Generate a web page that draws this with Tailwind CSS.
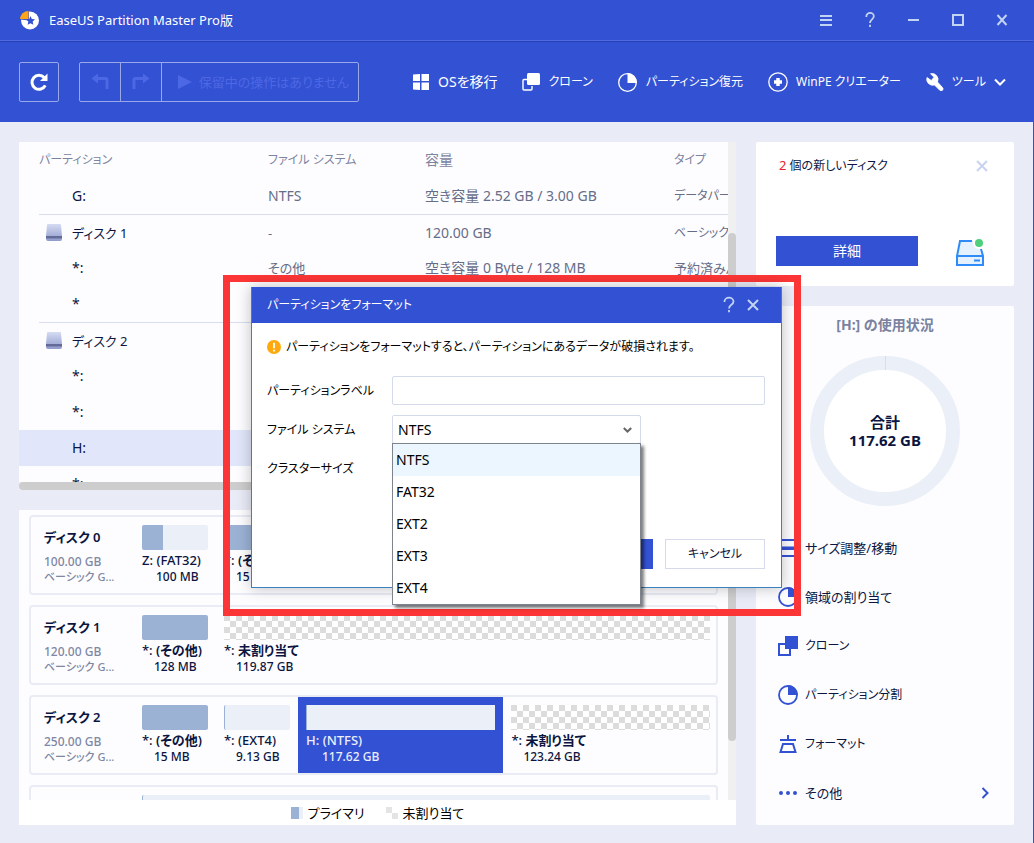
<!DOCTYPE html>
<html lang="ja">
<head>
<meta charset="utf-8">
<meta name="viewport" content="width=device-width, initial-scale=1">
<title>EaseUS Partition Master Pro版</title>
<script src="https://cdn.jsdelivr.net/npm/@tailwindcss/browser@4"></script>
</head>
<body class="relative flex h-screen min-h-[843px] flex-col overflow-hidden border-r border-[#3351d3] bg-[#e9ecf7] font-['Noto_Sans','Noto_Sans_CJK_JP',sans-serif] text-[13px] leading-5 text-[#0b1540] [font-feature-settings:'palt']">

<header class="bg-[#3351d3] text-white">
  <div class="flex h-[41px] items-center border-b border-[#4f6ce4] pr-[9px] pl-5">
    <svg class="mr-2.5 size-[19px]" viewBox="0 0 19 19"><circle cx="10" cy="9.500" r="9" fill="#fff"/><path d="M9 9.500V0A9.500 9.500 0 0 0 0 8.500z" fill="#3351d3"/><path d="M8.500 8.200V0A8.500 8.500 0 0 0 0 8z" fill="#ffa616"/><path d="M10.500 5l1.300 2.900 3.200.4-2.300 2.300.6 3.200-2.800-1.600-2.800 1.600.6-3.200-2.300-2.300 3.200-.4z" fill="#3351d3"/></svg>
    <h1 class="flex-1 text-[13px]">EaseUS Partition Master Pro版</h1>
    <button class="flex h-10 w-11 items-center justify-center" aria-label="メニュー"><svg class="size-5" viewBox="0 0 20 20" stroke="#c2d3f3" stroke-width="2"><path d="M4 6h12M4 10h12M4 15h12"/></svg></button>
    <button class="flex h-10 w-11 items-center justify-center" aria-label="ヘルプ"><svg class="size-5" viewBox="0 0 20 20" fill="none" stroke="#c2d3f3" stroke-width="1.800"><path d="M6.400 7V6.200a3.700 3.300 0 0 1 7.400 0c0 3-3.800 3.300-3.800 6.800M10 14.800v2.200"/></svg></button>
    <button class="flex h-10 w-11 items-center justify-center" aria-label="最小化"><svg class="size-5" viewBox="0 0 20 20" stroke="#c2d3f3" stroke-width="2"><path d="M4 10h11"/></svg></button>
    <button class="flex h-10 w-11 items-center justify-center" aria-label="最大化"><svg class="size-5" viewBox="0 0 20 20" fill="none" stroke="#c2d3f3" stroke-width="2"><path d="M5 5h10v10H5z"/></svg></button>
    <button class="flex h-10 w-11 items-center justify-center" aria-label="閉じる"><svg class="size-5" viewBox="0 0 20 20" stroke="#c2d3f3" stroke-width="2"><path d="M5.500 5l9 10M14.500 5l-9 10"/></svg></button>
  </div>
  <div class="flex h-[81px] items-center border-t border-[#2740b4] pr-[27px] pl-[19px]">
    <button class="mr-5 flex size-10 items-center justify-center rounded-xs border border-[#98a8e9]" aria-label="更新"><svg class="size-5" viewBox="0 0 20 20"><path d="M16.300 13.400A7 7 0 1 1 15.200 5.600" fill="none" stroke="#fff" stroke-width="3"/><path d="M18.500 1.500v7.500h-7.500z" fill="#fff"/></svg></button>
    <div class="flex h-10 rounded-xs border border-[#98a8e9] text-[#4d68e4]">
      <button class="flex w-[41px] items-center justify-center border-r border-[#98a8e9]" aria-label="元に戻す" disabled><svg class="size-5" viewBox="0 0 20 20"><path d="M8 1.500v10L1.500 6.500z" fill="currentColor"/><path d="M7 6.500h8.500a1.500 1.500 0 0 1 1.500 1.500V17" fill="none" stroke="currentColor" stroke-width="3"/></svg></button>
      <button class="flex w-[41px] items-center justify-center border-r border-[#98a8e9]" aria-label="やり直し" disabled><svg class="size-5" viewBox="0 0 20 20"><path d="M12 1.500v10l6.500-5z" fill="currentColor"/><path d="M13 6.500H4.500A1.500 1.500 0 0 0 3 8v9" fill="none" stroke="currentColor" stroke-width="3"/></svg></button>
      <button class="flex w-[196px] items-center justify-between pr-[9px] pl-4 text-[13px] whitespace-nowrap" disabled><svg class="size-[14px] shrink-0" viewBox="0 0 14 14"><path d="M0 0l14 7-14 7z" fill="currentColor"/></svg>保留中の操作はありません</button>
    </div>
    <nav class="ml-[53px] flex flex-1 items-center justify-between text-xs leading-5 whitespace-nowrap">
      <button class="flex items-center gap-2 text-sm"><svg class="size-[18px]" viewBox="0 0 18 18" fill="#fff"><path d="M1 1.500L8 1v7H1zM9.500 1H17v7H9.500zM1 9.500h7V17l-7-.5zM9.500 9.500H17V17H9.500z"/></svg>OSを移行</button>
      <button class="flex items-center gap-2"><svg class="size-[18px]" viewBox="0 0 18 18"><path d="M5 6.500H2a1 1 0 0 0-1 1V16a1 1 0 0 0 1 1h7a1 1 0 0 0 1-1v-3" fill="none" stroke="#fff" stroke-width="1.400"/><rect x="5" y="0" width="13" height="12" rx="1.500" fill="#fff"/></svg>クローン</button>
      <button class="flex items-center gap-2"><svg class="size-5" viewBox="0 0 20 20"><circle cx="9.500" cy="10.500" r="8.800" fill="none" stroke="#fff" stroke-width="1.300"/><path d="M9.500 1v10h9.500A9.500 10 0 0 0 9.500 1z" fill="#fff"/></svg>パーティション復元</button>
      <button class="flex items-center gap-2"><svg class="size-5" viewBox="0 0 20 20"><circle cx="10" cy="10" r="9.200" fill="none" stroke="#fff" stroke-width="1.300"/><path d="M10 6v8M6 10h8" stroke="#fff" stroke-width="3.500"/></svg>WinPE クリエーター</button>
      <button class="flex items-center gap-2"><svg class="size-[18px]" viewBox="0 0 18 18"><path d="M4.500.7L8 4.200 5.300 7.500 1 4.500A6 6 0 0 0 8.500 12l5.300 5.300a1.800 1.800 0 0 0 3-.5 2 2 0 0 0-.3-2.200L11.500 9A6 6 0 0 0 4.500.7z" fill="#fff" stroke="#fff" stroke-width=".8"/></svg>ツール<svg class="h-[8px] w-3" viewBox="0 0 12 8"><path d="M1 1.500l5 5 5-5" fill="none" stroke="#fff" stroke-width="2"/></svg></button>
    </nav>
  </div>
</header>

<main class="flex min-h-0 flex-1 gap-5 px-[19px] pt-5 pb-[18px]">
  <div class="flex min-w-0 flex-1 flex-col gap-5">
    <section class="flex min-h-0 flex-[348_1_0%] flex-col overflow-hidden">
      <div class="flex min-h-0 flex-1">
        <div class="min-w-0 flex-1 overflow-hidden bg-[#fdfdff]">
          <table class="w-full table-fixed border-separate border-spacing-0 text-left whitespace-nowrap text-[#666d88]">
            <thead class="text-xs leading-5 text-[#7d84a0]">
              <tr class="h-9"><th class="w-[249px] p-0 pl-5 font-normal">パーティション</th><th class="w-[157px] p-0 font-normal">ファイル システム</th><th class="w-[249px] p-0 text-sm font-normal">容量</th><th class="p-0 font-normal">タイプ</th></tr>
            </thead>
            <tbody>
              <tr class="h-9"><td class="p-0 pl-[53px] text-sm text-[#0b1540]">G:</td><td class="p-0 text-sm">NTFS</td><td class="p-0 text-sm">空き容量 2.52 GB / 3.00 GB</td><td class="overflow-hidden p-0 text-xs leading-5">データパーティション</td></tr>
              <tr class="h-9"><td class="p-0 pl-5 text-[#0b1540]"><div class="flex h-9 items-center gap-2.5 border-t border-[#d8deed] pl-[7px]"><svg class="h-[17px] w-4" viewBox="0 0 16 17"><defs><linearGradient id="disk" x1="0" y1="0" x2="0" y2="1"><stop offset="0" stop-color="#d5dcf3"/><stop offset="1" stop-color="#8f9bcb"/></linearGradient></defs><path d="M2 0h12a1 1 0 0 1 1 1l1 11v3a2 2 0 0 1-2 2H2a2 2 0 0 1-2-2v-3L1 1a1 1 0 0 1 1-1z" fill="url(#disk)"/><path d="M0 12h16v2.500H0z" fill="#646b99"/></svg>ディスク 1</div></td><td class="border-t border-[#d8deed] p-0">-</td><td class="border-t border-[#d8deed] p-0 text-sm">120.00 GB</td><td class="overflow-hidden border-t border-[#d8deed] p-0 text-xs leading-5">ベーシック, GPT</td></tr>
              <tr class="h-9"><td class="p-0 pl-[53px] text-sm text-[#0b1540]">*:</td><td class="p-0">その他</td><td class="p-0 text-sm">空き容量 0 Byte / 128 MB</td><td class="overflow-hidden p-0 text-[13px]">予約済みパーティション</td></tr>
              <tr class="h-9"><td class="p-0 pl-[53px] text-sm text-[#0b1540]">*</td><td></td><td></td><td></td></tr>
              <tr class="h-9"><td class="p-0 pl-5 text-[#0b1540]"><div class="flex h-9 items-center gap-2.5 border-t border-[#d8deed] pl-[7px]"><svg class="h-[17px] w-4" viewBox="0 0 16 17"><path d="M2 0h12a1 1 0 0 1 1 1l1 11v3a2 2 0 0 1-2 2H2a2 2 0 0 1-2-2v-3L1 1a1 1 0 0 1 1-1z" fill="url(#disk)"/><path d="M0 12h16v2.500H0z" fill="#646b99"/></svg>ディスク 2</div></td><td class="border-t border-[#d8deed] p-0"></td><td class="border-t border-[#d8deed] p-0"></td><td class="border-t border-[#d8deed] p-0"></td></tr>
              <tr class="h-9"><td class="p-0 pl-[53px] text-sm text-[#0b1540]">*:</td><td></td><td></td><td></td></tr>
              <tr class="h-9"><td class="p-0 pl-[53px] text-sm text-[#0b1540]">*:</td><td></td><td></td><td></td></tr>
              <tr class="h-9 bg-[#e1e6fa]"><td class="p-0 pl-[53px] text-sm text-[#0b1540]">H:</td><td></td><td></td><td></td></tr>
              <tr class="h-9"><td class="p-0 pl-[53px] text-sm text-[#0b1540]">*:</td><td></td><td></td><td></td></tr>
            </tbody>
          </table>
        </div>
        <div class="w-2 bg-[#f0f0f0] pt-[91px]"><div class="h-full rounded-full bg-[#cdcdcd]"></div></div>
      </div>
      <div class="h-2 bg-[#f0f0f0] pr-5"><div class="h-2 rounded-full bg-[#cdcdcd]"></div></div>
    </section>

    <section class="flex min-h-0 flex-[315_1_0%] flex-col overflow-hidden bg-white">
      <div class="flex min-h-0 flex-1 bg-[#fdfdff]">
        <div class="flex min-w-0 flex-1 flex-col gap-2.5 overflow-hidden px-2.5 pt-[5px] font-medium whitespace-nowrap">
          <article class="flex h-20 shrink-0 rounded border-2 border-[#e9ecf5]">
            <div class="w-[103px] px-[13px] pt-2.5 text-xs leading-[15px] text-[#8087a3]"><h2 class="mb-[7px] text-[13px] leading-5 font-semibold text-[#0b1540]">ディスク 0</h2><p>100.00 GB</p><p class="text-[11px]">ベーシック G...</p></div>
            <div class="w-[82px] px-2 pt-2"><div class="flex h-[25px] overflow-hidden rounded-xs bg-[#ebeff8]"><div class="w-[21px] bg-[#9cb2d5]"></div></div><p>Z: (FAT32)</p><p class="pl-3.5 text-xs leading-[13px]">100 MB</p></div>
            <div class="w-[82px] px-2 pt-2"><div class="h-[25px] rounded-xs bg-[#9cb2d5]"></div><p>*: <b class="font-semibold">(その他)</b></p><p class="pl-3 text-xs leading-[13px]">15 MB</p></div>
          </article>
          <article class="flex h-20 shrink-0 rounded border-2 border-[#e9ecf5]">
            <div class="w-[103px] px-[13px] pt-2.5 text-xs leading-[15px] text-[#8087a3]"><h2 class="mb-[7px] text-[13px] leading-5 font-semibold text-[#0b1540]">ディスク 1</h2><p>120.00 GB</p><p class="text-[11px]">ベーシック G...</p></div>
            <div class="w-[82px] px-2 pt-2"><div class="h-[25px] rounded-xs bg-[#9cb2d5]"></div><p>*: <b class="font-semibold">(その他)</b></p><p class="pl-3 text-xs leading-[13px]">128 MB</p></div>
            <div class="flex-1 pt-2 pr-1.5 pl-2"><div class="h-[25px] bg-[conic-gradient(#fff_25%,#dcdcdc_0_50%,#fff_0_75%,#dcdcdc_0)] bg-[length:12px_12px]"></div><p>*: <b class="font-semibold">未割り当て</b></p><p class="pl-3 text-xs leading-[13px]">119.87 GB</p></div>
          </article>
          <article class="flex h-20 shrink-0 rounded border-2 border-[#e9ecf5]">
            <div class="w-[103px] px-[13px] pt-2.5 text-xs leading-[15px] text-[#8087a3]"><h2 class="mb-[7px] text-[13px] leading-5 font-semibold text-[#0b1540]">ディスク 2</h2><p>250.00 GB</p><p class="text-[11px]">ベーシック G...</p></div>
            <div class="w-[82px] px-2 pt-2"><div class="h-[25px] rounded-xs bg-[#9cb2d5]"></div><p>*: <b class="font-semibold">(その他)</b></p><p class="pl-3 text-xs leading-[13px]">15 MB</p></div>
            <div class="w-[82px] px-2 pt-2"><div class="h-[25px] rounded-xs border-l border-[#9cb2d5] bg-[#ebeff8]"></div><p>*: (EXT4)</p><p class="pl-3 text-xs leading-[13px]">9.13 GB</p></div>
            <div class="flex-[205] bg-[#3351d3] px-2 pt-2 text-[#ebeffb]"><div class="h-[25px] border-l border-[#9cb2d5] bg-[#ebeff8]"></div><p>H: (NTFS)</p><p class="pl-4 text-xs leading-[13px]">117.62 GB</p></div>
            <div class="flex-[215] pt-2 pr-1.5 pl-2"><div class="h-[25px] bg-[conic-gradient(#fff_25%,#dcdcdc_0_50%,#fff_0_75%,#dcdcdc_0)] bg-[length:12px_12px]"></div><p>*: <b class="font-semibold">未割り当て</b></p><p class="pl-3 text-xs leading-[13px]">123.24 GB</p></div>
          </article>
          <article class="flex h-20 shrink-0 rounded border-2 border-[#e9ecf5] pl-[111px]">
            <div class="flex-1 pt-2 pr-1.5"><div class="h-[25px] rounded-xs border-l border-[#9cb2d5] bg-[#ebeff8]"></div></div>
          </article>
        </div>
        <div class="w-2 bg-[#f0f0f0] pb-[59px]"><div class="h-full rounded-b-full bg-[#cdcdcd]"></div></div>
      </div>
      <div class="flex h-[25px] items-center justify-center gap-[21px] text-[13px] text-black">
        <span class="flex items-center gap-[5px]"><i class="h-3 w-3 border-r-4 border-[#ebeff8] bg-[#9cb2d5]"></i>プライマリ</span>
        <span class="flex items-center gap-[5px]"><i class="h-3 w-3 bg-[conic-gradient(#fff_25%,#e4e4e4_0_50%,#fff_0_75%,#e4e4e4_0)]"></i>未割り当て</span>
      </div>
    </section>
  </div>

  <aside class="flex w-[258px] shrink-0 flex-col gap-5">
    <section class="flex h-36 flex-col justify-between rounded-xs bg-white px-5 pt-[13px] pb-5">
      <div class="flex items-center justify-between pr-1.5 pl-[3px]"><p class="text-xs leading-5"><span class="text-[13px] text-[#e5222d]">2</span> 個の新しいディスク</p><button aria-label="閉じる"><svg class="size-3" viewBox="0 0 12 12" stroke="#c9d3f0" stroke-width="2"><path d="M1 1l10 10M11 1L1 11"/></svg></button></div>
      <div class="flex items-end justify-between pr-2.5">
        <button class="h-[30px] w-[142px] bg-[#3351d3] text-sm text-white">詳細</button>
        <svg class="h-7 w-7" viewBox="0 0 28 28"><path d="M4 3h13.500l7 6 2.500 9v9H1v-9z" fill="#e6f1ff"/><path d="M16 3H4L1 18v9h26v-9L25 11M1 18h26M18 22.500h6" fill="none" stroke="#2e8bf7" stroke-width="2"/><circle cx="23" cy="5" r="6" fill="#fff"/><circle cx="23" cy="5" r="4" fill="#4fce7c"/></svg>
      </div>
    </section>
    <section class="flex flex-1 flex-col rounded-xs bg-[#fdfdff]">
      <h2 class="pt-[9px] text-center text-sm leading-5 font-bold text-[#7a82a0]">[H:] の使用状況</h2>
      <div class="mx-auto mt-[21px] grid size-[150px] place-items-center">
        <svg class="col-start-1 row-start-1 size-[150px]" viewBox="0 0 150 150"><circle cx="75" cy="75" r="68" fill="#fff" stroke="#ebeff8" stroke-width="14"/><path d="M75.500 0v14" stroke="#d5def0"/></svg>
        <p class="z-10 col-start-1 row-start-1 text-center text-[15px] leading-[18px] font-bold">合計<br>117.62 GB</p>
      </div>
      <ul class="mt-[17px] px-[22px] text-[13px]">
        <li><button class="flex h-[49px] w-full items-center gap-[7px]"><svg class="size-5" viewBox="0 0 20 20" fill="#3351d3"><path d="M0 1h20v2H0zM0 17h20v2H0zM1 7h2v1.500h14V7h2v6h-2v-1H3v1H1z"/></svg>サイズ調整/移動</button></li>
        <li><button class="flex h-[49px] w-full items-center gap-[7px]"><svg class="size-5" viewBox="0 0 20 20"><circle cx="10" cy="10" r="9" fill="none" stroke="#3351d3" stroke-width="1.800"/><path d="M10 0v10h10A10 10 0 0 0 10 0z" fill="#3351d3"/></svg>領域の割り当て</button></li>
        <li><button class="flex h-[49px] w-full items-center gap-[7px]"><svg class="size-5" viewBox="0 0 20 20"><path d="M8 8H1v11h11v-7" fill="none" stroke="#3351d3" stroke-width="2"/><path d="M7 0h13v13H7z" fill="#3351d3"/></svg><span class="text-xs leading-5">クローン</span></button></li>
        <li><button class="flex h-[49px] w-full items-center gap-[7px]"><svg class="size-5" viewBox="0 0 20 20"><circle cx="10" cy="10" r="9" fill="none" stroke="#3351d3" stroke-width="1.800"/><path d="M10 0v10h10A10 10 0 0 0 10 0z" fill="#3351d3"/></svg><span class="text-xs leading-5">パーティション分割</span></button></li>
        <li><button class="flex h-[49px] w-full items-center gap-[7px]"><svg class="size-5" viewBox="0 0 20 20" fill="none" stroke="#3351d3" stroke-width="2"><path d="M10 1v5M2 6h16" /><path d="M5 10h10l2.500 8h-15z"/></svg><span class="text-xs leading-5">フォーマット</span></button></li>
        <li><button class="flex h-[49px] w-full items-center gap-[7px]"><svg class="size-5" viewBox="0 0 20 20" fill="#3351d3"><circle cx="3" cy="10" r="2"/><circle cx="10" cy="10" r="2"/><circle cx="17" cy="10" r="2"/></svg>その他<svg class="mr-[3px] ml-auto h-3 w-2" viewBox="0 0 8 12"><path d="M1.500 1L6.500 6l-5 5" fill="none" stroke="#3351d3" stroke-width="2"/></svg></button></li>
      </ul>
    </section>
  </aside>
</main>

<div class="absolute top-[275px] left-[223px] h-[341px] w-[578px] border-[7px] border-[#fc3636] pt-[5px] pl-[21px]">
  <div role="dialog" aria-labelledby="dlg-title" class="relative flex h-[301px] w-[531px] flex-col border border-t-0 border-[#3a82bd] bg-white text-xs leading-5 text-black shadow-[0_0_14px_rgba(0,0,0,0.25)]">
    <div class="flex h-9 items-center bg-[#3351d3] pr-[22px] pl-[15px] text-white">
      <h2 id="dlg-title" class="flex-1">パーティションをフォーマット</h2>
      <button class="mr-2.5" aria-label="ヘルプ"><svg class="h-5 w-4" viewBox="2 0 16 20" fill="none" stroke="#c2d3f3" stroke-width="1.800"><path d="M5.500 7V6.500a4.500 3.800 0 0 1 9 0c0 3.500-4.500 3-4.500 7M10 15v2.200"/></svg></button>
      <button aria-label="閉じる"><svg class="size-3" viewBox="0 0 12 12" stroke="#c2d3f3" stroke-width="2"><path d="M1 1l10 10M11 1L1 11"/></svg></button>
    </div>
    <form class="flex flex-1 flex-col px-4 pt-3.5 pb-[18px] pl-[15px]">
      <p class="flex items-center gap-[5px] whitespace-nowrap"><svg class="size-[14px] shrink-0" viewBox="0 0 14 14"><circle cx="7" cy="7" r="7" fill="#ffa90c"/><path d="M7 2.800v5.500M7 9.800v1.700" stroke="#fff" stroke-width="1.800"/></svg>パーティションをフォーマットすると、パーティションにあるデータが破損されます。</p>
      <div class="mt-[19px] grid grid-cols-[125px_1fr] items-center gap-y-2.5">
        <label for="label">パーティションラベル</label>
        <input id="label" type="text" class="h-[29px] w-full rounded-xs border border-[#d3dae9] px-1 outline-none">
        <label for="fs">ファイル システム</label>
        <div class="relative w-[249px] text-sm">
          <select id="fs" class="block h-[29px] w-full appearance-none rounded-xs border border-[#d3dae9] bg-white pl-[5px]"><option>NTFS</option><option>FAT32</option><option>EXT2</option><option>EXT3</option><option>EXT4</option></select>
          <svg class="pointer-events-none absolute top-3 right-[9px] h-[6px] w-[9px]" viewBox="0 0 9 6"><path d="M.8 1l3.700 3.500L8.200 1" fill="none" stroke="#666" stroke-width="2"/></svg>
          <ul role="listbox" aria-label="ファイル システム" class="absolute top-7 left-0 z-20 w-full border border-[#7d848e] bg-white leading-8 shadow-[3px_3px_3px_rgba(0,0,0,0.5)]">
            <li role="option" aria-selected="true" class="bg-[#ebf6fe] pl-[3px]">NTFS</li>
            <li role="option" aria-selected="false" class="pl-[3px]">FAT32</li>
            <li role="option" aria-selected="false" class="pl-[3px]">EXT2</li>
            <li role="option" aria-selected="false" class="pl-[3px]">EXT3</li>
            <li role="option" aria-selected="false" class="pl-[3px]">EXT4</li>
          </ul>
        </div>
        <p class="leading-[29px]">クラスターサイズ</p>
      </div>
      <div class="mt-auto flex justify-end gap-3">
        <button type="button" class="h-[30px] w-[100px] bg-[#3351d3] text-white" aria-label="OK"></button>
        <button type="button" class="h-[30px] w-[100px] border border-[#d5daec] bg-white text-[#0b1540]">キャンセル</button>
      </div>
    </form>
  </div>
</div>
</body>
</html>
